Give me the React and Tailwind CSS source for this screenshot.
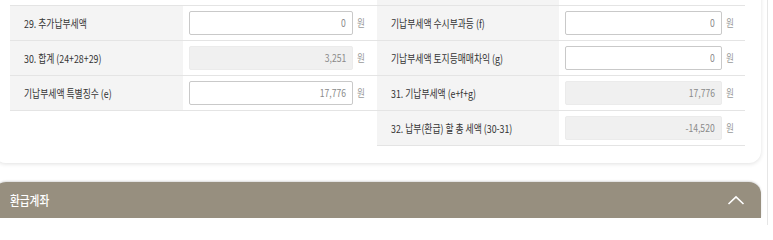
import React from "react";

const font = { fontFamily: '"Noto Sans CJK KR", "Noto Sans", sans-serif' };

function Row({ label, value, editable, labelW, inputW }) {
  return (
    <div className="flex h-[35px] border-b border-[#e4e4e4]">
      <div className={`${labelW} bg-[#f4f4f4] flex items-center pl-[14px] overflow-hidden`}>
        <span className="inline-block origin-left scale-x-[0.8] whitespace-nowrap text-[11px] text-[#333]">
          {label}
        </span>
      </div>
      <div className="flex-1 flex items-center pl-[6px]">
        {value !== undefined && (
          <>
            <div
              className={`${inputW} h-[24px] flex items-center justify-end pr-[6px] rounded-[2px] border ${
                editable ? "bg-white border-[#c9c9c9]" : "bg-[#f0f0f0] border-[#ebebeb]"
              }`}
            >
              <span className="inline-block origin-right scale-x-[0.82] text-[10.5px] text-[#8a8a8a]">
                {value}
              </span>
            </div>
            <span className="ml-[4px] inline-block origin-left scale-x-[0.82] text-[10.5px] text-[#9a9a9a]">원</span>
          </>
        )}
      </div>
    </div>
  );
}

export default function App() {
  return (
    <div className="w-[773px] h-[225px] overflow-hidden bg-white flex" style={font}>
      <div className="w-[767px] flex flex-col">
        {/* card */}
        <div className="-mt-[29px] -ml-[6px] w-[767px] bg-white rounded-b-[12px] shadow-[0_1px_4px_rgba(0,0,0,0.12)] pl-[16px] pr-[16px] pb-[17px] flex">
          <div className="w-[367px] flex flex-col">
            <div className="h-[35px] border-b border-[#e4e4e4]" />
            <Row label="29. 추가납부세액" value="0" editable labelW="w-[173px]" inputW="w-[164px]" />
            <Row label="30. 합계 (24+28+29)" value="3,251" labelW="w-[173px]" inputW="w-[164px]" />
            <Row label="기납부세액 특별징수 (e)" value="17,776" editable labelW="w-[173px]" inputW="w-[164px]" />
          </div>
          <div className="w-[368px] flex flex-col">
            <Row label="" labelW="w-[182px]" inputW="w-[157px]" />
            <Row label="기납부세액 수시부과등 (f)" value="0" editable labelW="w-[182px]" inputW="w-[157px]" />
            <Row label="기납부세액 토지등매매차익 (g)" value="0" editable labelW="w-[182px]" inputW="w-[157px]" />
            <Row label="31. 기납부세액 (e+f+g)" value="17,776" labelW="w-[182px]" inputW="w-[157px]" />
            <Row label="32. 납부(환급) 할 총 세액 (30-31)" value="-14,520" labelW="w-[182px]" inputW="w-[157px]" />
          </div>
        </div>
        {/* section header */}
        <div className="mt-[19px] -ml-[6px] w-[767px] h-[36px] bg-[#978f7f] rounded-t-[12px] flex items-center justify-between pl-[16px] pr-[16px] shadow-[0_-1px_2px_rgba(0,0,0,0.15)]">
          <span className="inline-block origin-left scale-x-[0.82] text-white text-[13px] font-medium">환급계좌</span>
          <svg width="18" height="10" viewBox="0 0 18 10" fill="none">
            <path d="M1.5 9 L9 1.8 L16.5 9" stroke="white" strokeWidth="1.6" />
          </svg>
        </div>
        <div className="flex-1 bg-white" />
      </div>
      <div className="w-[1px] bg-[#e6e6e6]" />
      <div className="flex-1 bg-white" />
    </div>
  );
}
